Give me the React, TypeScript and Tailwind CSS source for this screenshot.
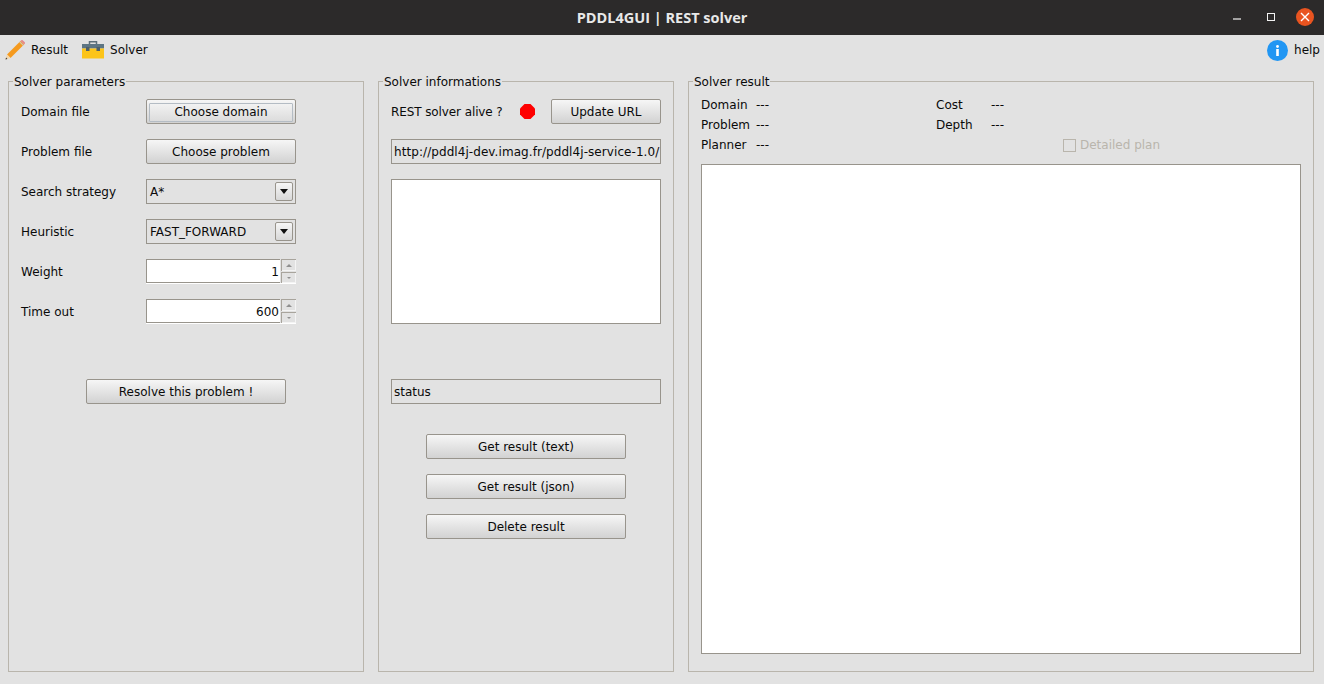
import { ReactNode } from "react";

function Panel({ title, className = "", children }: { title: string; className?: string; children: ReactNode }) {
  return (
    <section className={`relative border border-[#b9b5ac] ${className}`}>
      <span className="absolute left-[4px] top-[-7px] bg-[#e2e2e2] px-px leading-[15px]">{title}</span>
      {children}
    </section>
  );
}

function Button({ label, className = "", focused = false }: { label: string; className?: string; focused?: boolean }) {
  return (
    <button className={`flex h-[25px] items-center justify-center rounded-[2px] border border-[#98948c] bg-gradient-to-b from-[#f6f6f6] to-[#d2d2d2] pt-px ${className}`}>
      {focused ? (
        <span className="flex h-[19px] w-[144px] items-center justify-center rounded-[1px] border border-[#b4bcc4] bg-gradient-to-b from-[#f2f2f2] to-[#dcdcdc]">{label}</span>
      ) : (
        label
      )}
    </button>
  );
}

function Combo({ value }: { value: string }) {
  return (
    <div className="flex h-[25px] w-[150px] items-center justify-between border border-[#98948c] bg-[#e2e2e2] pl-[3px] pr-[2px]">
      <span>{value}</span>
      <span className="flex h-[19px] w-[18px] items-center justify-center rounded-[2px] border border-[#98948c] bg-gradient-to-b from-[#f6f6f6] to-[#d8d8d8]">
        <svg width="8" height="5" viewBox="0 0 8 5">
          <path d="M0 0h8L4 5z" fill="#111" />
        </svg>
      </span>
    </div>
  );
}

function Spin({ value }: { value: string }) {
  return (
    <div className="flex h-[24px] w-[150px] self-start shadow-[0_1px_0_#fff]">
      <div className="flex w-[134px] items-center justify-end border-b border-l border-t border-[#98948c] bg-white pr-[1px] pt-px">{value}</div>
      <div className="flex w-[16px] flex-col justify-between pl-px">
        <span className="flex h-[12px] items-center justify-center border-l border-t border-[#a8a49c] bg-[#e2e2e2] shadow-[inset_-1px_-1px_0_#f4f4f4]">
          <svg width="6" height="3" viewBox="0 0 6 3">
            <path d="M3 0l3 3H0z" fill="#8f8f8f" />
          </svg>
        </span>
        <span className="flex h-[11px] items-center justify-center border-l border-t border-[#a8a49c] bg-[#e2e2e2] shadow-[inset_-1px_-1px_0_#f4f4f4]">
          <svg width="4" height="2" viewBox="0 0 4 2">
            <path d="M0 0h4L2 2z" fill="#8f8f8f" />
          </svg>
        </span>
      </div>
    </div>
  );
}

function Param({ label, children }: { label: string; children: ReactNode }) {
  return (
    <div className="flex h-[25px] items-center">
      <span className="w-[125px] pt-px">{label}</span>
      {children}
    </div>
  );
}

function ResultLine({ label, value, width }: { label: string; value: string; width: string }) {
  return (
    <div className="flex h-[20px] items-center">
      <span className={width}>{label}</span>
      <span>{value}</span>
    </div>
  );
}

export default function App() {
  return (
    <div
      className="flex h-[684px] w-[1324px] flex-col overflow-hidden bg-[#e2e2e2] text-[12px] text-[#0a0a0a]"
      style={{ fontFamily: '"DejaVu Sans", sans-serif' }}
    >
      {/* window title */}
      <header className="relative flex h-[35px] shrink-0 items-center justify-center bg-[#2c2a2a]">
        <span className="text-[14.5px] font-bold text-[#e8e8e8]" style={{ fontFamily: '"Open Sans", sans-serif' }}>
          PDDL4GUI | REST solver
        </span>
        <div className="absolute right-[10px] top-[8px] flex items-center">
          <svg width="8" height="2" viewBox="0 0 8 2" className="mr-[26px] mt-[3px]">
            <rect width="8" height="1.2" y="0.4" fill="#f2f2f2" />
          </svg>
          <span className="mr-[21px] h-[8px] w-[8px] border border-[#f2f2f2]" />
          <span className="flex h-[18px] w-[18px] items-center justify-center rounded-full bg-[#e95420]">
            <svg width="10" height="10" viewBox="0 0 10 10">
              <path d="M1 1l8 8M9 1l-8 8" stroke="#fff" strokeWidth="1.4" />
            </svg>
          </span>
        </div>
      </header>

      {/* tool bar */}
      <nav className="flex h-[30px] shrink-0 items-center pl-[4px] pr-[4px]">
        <svg width="22" height="22" viewBox="0 0 22 22" className="mr-[5px]">
          <path d="M3 15.500L16.500 2l3.500 3.500L6.500 19z" fill="#f59a1e" />
          <path d="M16.500 2l.8-.8c.4-.4 1-.4 1.400 0l2.100 2.100c.4.4.4 1 0 1.400l-.8.800z" fill="#e58a8a" />
          <path d="M16 2.500l3.500 3.500-.7.700-3.500-3.500z" fill="#c9c9c9" />
          <path d="M3 15.500L6.500 19l-5 1.500z" fill="#f5d6a8" />
          <path d="M2.100 18.600l1.300 1.300-1.900.6z" fill="#333" />
        </svg>
        <span>Result</span>
        <svg width="24" height="20" viewBox="0 0 24 20" className="ml-[13px] mr-[5px]">
          <path d="M8.500 4V1.700h7V4" fill="none" stroke="#5d6f79" strokeWidth="1.500" />
          <rect x="1" y="4" width="22" height="4.500" fill="#5d7583" />
          <rect x="1" y="8.500" width="22" height="10" fill="#fcc419" />
          <rect x="5" y="7" width="3.500" height="4" fill="#4d5f69" />
          <rect x="15.500" y="7" width="3.500" height="4" fill="#4d5f69" />
        </svg>
        <span>Solver</span>
        <span className="ml-auto mr-[6px] flex h-[21px] w-[21px] items-center justify-center rounded-full bg-[#2196f3]">
          <svg width="5" height="11" viewBox="0 0 5 11">
            <circle cx="2.500" cy="1.500" r="1.400" fill="#fff" />
            <rect x="1.200" y="4" width="2.600" height="7" fill="#fff" />
          </svg>
        </span>
        <span>help</span>
      </nav>

      <main className="flex items-start gap-[14px] pl-[8px] pt-[16px]">
        <Panel title="Solver parameters" className="h-[591px] w-[356px] pl-[12px] pt-[17px]">
          <div className="flex flex-col gap-[15px]">
            <Param label="Domain file">
              <Button label="Choose domain" focused className="w-[150px]" />
            </Param>
            <Param label="Problem file">
              <Button label="Choose problem" className="w-[150px]" />
            </Param>
            <Param label="Search strategy">
              <Combo value="A*" />
            </Param>
            <Param label="Heuristic">
              <Combo value="FAST_FORWARD" />
            </Param>
            <Param label="Weight">
              <Spin value="1" />
            </Param>
            <Param label="Time out">
              <Spin value="600" />
            </Param>
          </div>
          <Button label="Resolve this problem !" className="ml-[65px] mt-[55px] w-[200px]" />
        </Panel>

        <Panel title="Solver informations" className="h-[591px] w-[296px] px-[12px] pt-[17px]">
          <div className="flex h-[25px] items-center">
            <span className="w-[129px] pt-px tracking-[-0.1px]">REST solver alive ?</span>
            <svg width="15" height="15" viewBox="0 0 15 15">
              <path d="M4.500 0h6L15 4.500v6L10.500 15h-6L0 10.500v-6z" fill="#fe0000" />
            </svg>
            <Button label="Update URL" className="ml-[16px] w-[110px]" />
          </div>
          <div className="mt-[15px] flex h-[25px] items-center overflow-hidden whitespace-nowrap border border-[#98948c] bg-[#e2e2e2] pl-[2px] pt-px tracking-[0.07px]">
            http://pddl4j-dev.imag.fr/pddl4j-service-1.0/
          </div>
          <div className="mt-[15px] h-[145px] border border-[#98948c] bg-white" />
          <div className="mt-[55px] flex h-[25px] items-center border border-[#98948c] bg-[#e2e2e2] pl-[2px] pt-px">status</div>
          <div className="mt-[30px] flex flex-col items-center gap-[15px]">
            <Button label="Get result (text)" className="w-[200px]" />
            <Button label="Get result (json)" className="w-[200px]" />
            <Button label="Delete result" className="w-[200px]" />
          </div>
        </Panel>

        <Panel title="Solver result" className="h-[591px] w-[626px] pl-[12px] pt-[13px]">
          <div className="flex h-[69px]">
            <div className="w-[235px]">
              <ResultLine label="Domain" value="---" width="w-[55px]" />
              <ResultLine label="Problem" value="---" width="w-[55px]" />
              <ResultLine label="Planner" value="---" width="w-[55px]" />
            </div>
            <div className="w-[127px]">
              <ResultLine label="Cost" value="---" width="w-[55px]" />
              <ResultLine label="Depth" value="---" width="w-[55px]" />
            </div>
            <div className="pt-[40px]">
              <div className="flex h-[20px] items-center text-[#b9b5ac]">
                <span className="mr-[4px] h-[13px] w-[13px] border border-[#b9b5ac]" />
                Detailed plan
              </div>
            </div>
          </div>
          <div className="h-[490px] w-[600px] border border-[#98948c] bg-white" />
        </Panel>
      </main>
    </div>
  );
}
